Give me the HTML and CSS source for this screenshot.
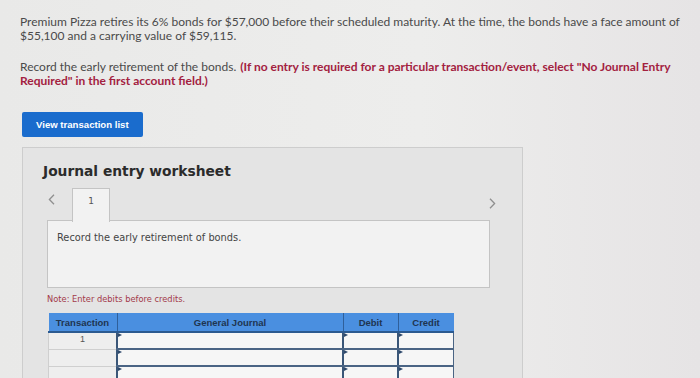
FILE: index.html
```html
<!DOCTYPE html>
<html>
<head>
<meta charset="utf-8">
<link rel="stylesheet" href="styles.css">
</head>
<body>
<div class="page">
  <p class="q">Premium Pizza retires its 6% bonds for $57,000 before their scheduled maturity. At the time, the bonds have a face amount of $55,100 and a carrying value of $59,115.</p>
  <p class="instr">Record the early retirement of the bonds.<b class="red">(If no entry is required for a particular transaction/event, select "No Journal Entry Required" in the first account field.)</b></p>
  <div class="btn">View transaction list</div>
  <div class="panel">
    <h2 class="title">Journal entry worksheet</h2>
    <div class="tabs">
      <svg class="arrow prev" width="7" height="11" viewBox="0 0 7 11"><path d="M6 0.8 L1.4 5.5 L6 10.2" fill="none" stroke="#8f8f8f" stroke-width="1.3"/></svg>
      <span class="tab">1</span>
      <svg class="arrow next" width="7" height="11" viewBox="0 0 7 11"><path d="M1 0.8 L5.6 5.5 L1 10.2" fill="none" stroke="#8f8f8f" stroke-width="1.3"/></svg>
    </div>
    <div class="content">Record the early retirement of bonds.</div>
    <div class="note">Note: Enter debits before credits.</div>
    <table class="journal">
      <thead>
        <tr><th class="c-t">Transaction</th><th class="c-g">General Journal</th><th class="c-d">Debit</th><th class="c-c">Credit</th></tr>
      </thead>
      <tbody>
        <tr><td class="tr">1</td><td class="in"></td><td class="in"></td><td class="in"></td></tr>
        <tr><td class="tr"></td><td class="in"></td><td class="in"></td><td class="in"></td></tr>
        <tr><td class="tr"></td><td class="in"></td><td class="in"></td><td class="in"></td></tr>
      </tbody>
    </table>
  </div>
</div>
</body>
</html>
```
FILE: styles.css
```css
html, body { margin: 0; padding: 0; }
body {
  background: linear-gradient(90deg, #e9e9e8 0%, #ededec 60%, #e6e4e5 100%);
  font-family: "Lato", "Liberation Sans", sans-serif;
  color: #4a4a4a;
  overflow: hidden;
  height: 378px;
}
.page { padding: 15px 0 0 20px; }
.q {
  margin: 0;
  font-size: 12px;
  line-height: 14px;
  width: 676px;
}
.instr {
  margin: 17px 0 0 0;
  font-size: 12px;
  line-height: 14px;
  width: 676px;
}
.red { color: #a3213f; font-weight: 700; margin-left: 4px; }
.btn {
  display: inline-block;
  margin: 24px 0 0 2px;
  background: #1a6ccd;
  color: #fff;
  font-family: "Liberation Sans", sans-serif;
  font-weight: 700;
  font-size: 9.6px;
  line-height: 25px;
  padding: 0 14px;
  border-radius: 2px;
}
.panel {
  margin: 10px 0 0 2px;
  width: 499px;
  height: 240px;
  background: #e4e4e4;
  border: 1px solid #cdcdcd;
  border-bottom: none;
  font-family: "DejaVu Sans", sans-serif;
}
.title {
  margin: 14px 0 0 20px;
  font-size: 13.8px;
  font-weight: 700;
  color: #2b2b2b;
  line-height: 18px;
}
.tabs {
  display: flex;
  align-items: flex-start;
  margin: 8px 0 0 0;
  height: 33px;
}
.arrow { display: block; flex: none; }
.prev { margin: 6px 0 0 25px; }
.tab {
  margin-left: 17px;
  width: 36px;
  background: #f2f2f2;
  border: 1px solid #c4c4c4;
  border-bottom: none;
  font-size: 9px;
  color: #555;
  text-align: center;
  line-height: 24px;
  position: relative;
  z-index: 1;
  height: 33px;
}
.next { margin: 10px 26px 0 auto; }
.content {
  margin: -1px 0 0 24px;
  width: 432px;
  height: 55px;
  background: #f2f2f2;
  border: 1px solid #c4c4c4;
  padding: 11px 0 0 9px;
  font-size: 9.8px;
  color: #444;
}
.note {
  margin: 5px 0 0 24px;
  font-size: 8.3px;
  color: #a33a4a;
  line-height: 12px;
}
.journal {
  margin: 8px 0 0 25px;
  border-collapse: collapse;
  width: 403px;
  font-family: "Liberation Sans", sans-serif;
  table-layout: fixed;
}
.journal th {
  background: #4a8fe0;
  color: #1f3550;
  font-size: 9.5px;
  font-weight: 700;
  height: 18px;
  padding: 0;
  border-right: 1px solid #2f5f9a;
  border-bottom: 2px solid #2c5a90;
}
.journal th.c-c { border-right: none; }
.c-t { width: 68px; }
.c-g { width: 225px; }
.c-d { width: 54px; }
.c-c { width: 55px; }
.journal td {
  height: 15px;
  padding: 0;
}
.journal td.tr {
  background: #eeeeee;
  border: 1px solid #cfcfcf;
  text-align: center;
  font-size: 9px;
  color: #555;
  vertical-align: top;
  line-height: 12px;
}
.journal td.in {
  background: #f6f6f6;
  border-left: 2px solid #3a5678;
  border-bottom: 2px solid #4a6484;
  border-right: 1px solid #4a6484;
  position: relative;
}
.journal td.in::before {
  content: "";
  position: absolute;
  left: 0;
  top: 0;
  border-left: 4px solid #2f4a6c;
  border-top: 2px solid transparent;
  border-bottom: 2px solid transparent;
}
```
